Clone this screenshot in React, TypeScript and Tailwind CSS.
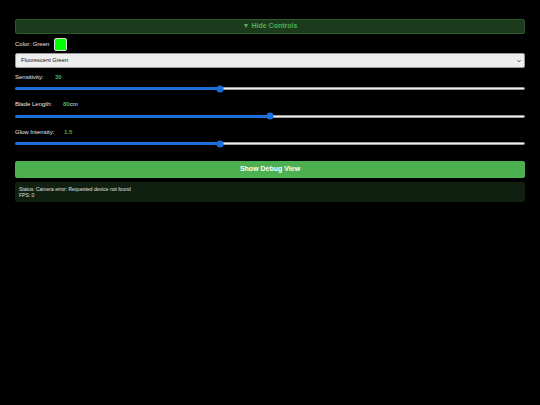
import { useState } from 'react';

type SliderProps = {
  value: number;
  min: number;
  max: number;
};

const Slider = ({ value, min, max }: SliderProps) => {
  const frac = (value - min) / (max - min);
  return (
    <div className="mt-[3.5px] h-[8px] flex items-center">
      <div className="relative w-full h-[3px] flex rounded-full">
        <div className="h-full rounded-l-full bg-[#1b6fd8]" style={{ width: `calc(3.5px + ${frac} * (100% - 7px))` }}></div>
        <div className="h-full flex-1 rounded-r-full bg-[#efefef] border-[0.5px] border-[#9c9c9c]"></div>
        <div
          className="absolute top-1/2 -translate-y-1/2 -translate-x-1/2 w-[7px] h-[7px] rounded-full bg-[#1b6fd8]"
          style={{ left: `calc(3.5px + ${frac} * (100% - 7px))` }}
        ></div>
      </div>
    </div>
  );
};

export default function App() {
  const [color, setColor] = useState('green');
  const sensitivity = 30;
  const blade = 80;
  const glow = 1.5;

  return (
    <div className="min-h-[405px] bg-black px-[15px] pt-[19px] font-['Liberation_Sans',Arial,sans-serif] text-[#e6e6e6]">
      {/* Toggle bar */}
      <button className="w-full h-[15px] flex items-center justify-center rounded-[2px] border border-[#2c5a2c] bg-[#1c3a1c] text-[7px] font-bold text-[#4caf50]">
        ▼ Hide Controls
      </button>

      {/* Color picker */}
      <div className="mt-[4px] h-[13px] flex items-center">
        <span className="text-[6px]">Color: Green</span>
        <span className="ml-[5px] w-[13px] h-[13px] rounded-[2px] border border-[#dcdcdc] bg-[#00ff00]"></span>
      </div>

      <div className="relative mt-[2px] h-[15px]">
        <select
          value={color}
          onChange={e => setColor(e.target.value)}
          className="block w-full h-[15px] appearance-none rounded-[2px] border border-[#9a9a9a] bg-[#eeeeee] px-[5px] py-0 text-[5.7px] leading-[13px] text-[#111] outline-none"
        >
          <option value="green">Fluorescent Green</option>
          <option value="blue">Blue</option>
          <option value="red">Red</option>
        </select>
        <svg
          className="absolute right-[4px] top-1/2 -translate-y-1/2 w-[4px] h-[3px] pointer-events-none"
          viewBox="0 0 10 8"
          fill="none"
          stroke="#333"
          strokeWidth="2.4"
        >
          <path d="M1 2l4 4 4-4" />
        </svg>
      </div>

      {/* Sliders */}
      <div className="mt-[5px] h-[8px] flex items-center text-[6px]">
        <span className="w-[40px]">Sensitivity:</span>
        <span className="text-[#4caf50] font-bold">{sensitivity}</span>
      </div>
      <Slider value={sensitivity} min={10} max={60} />

      <div className="mt-[8px] h-[8px] flex items-center text-[6px]">
        <span className="w-[48px]">Blade Length:</span>
        <span className="text-[#4caf50] font-bold">{blade}</span>
        <span>cm</span>
      </div>
      <Slider value={blade} min={40} max={120} />

      <div className="mt-[8px] h-[8px] flex items-center text-[6px]">
        <span className="w-[49px]">Glow Intensity:</span>
        <span className="text-[#4caf50] font-bold">{glow}</span>
      </div>
      <Slider value={glow} min={0.5} max={3} />

      <button className="mt-[13.5px] w-full h-[17px] flex items-center justify-center rounded-[2px] bg-[#4caf50] text-[7px] font-bold text-white">
        Show Debug View
      </button>

      {/* Status */}
      <div className="mt-[4px] h-[20px] rounded-[2px] bg-[#0f1f10] px-[4px] pt-[4px] text-[5px] leading-[6px] text-[#e0e0e0]">
        <div>Status: Camera error: Requested device not found</div>
        <div>FPS: 0</div>
      </div>
    </div>
  );
}
